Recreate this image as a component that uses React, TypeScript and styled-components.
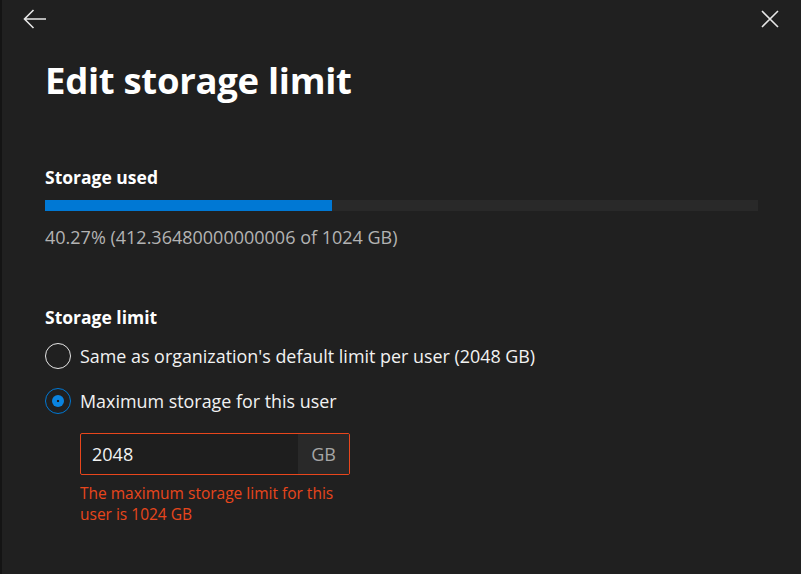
import React, { useState } from 'react';
import styled, { createGlobalStyle } from 'styled-components';

const GlobalStyle = createGlobalStyle`
  html, body {
    margin: 0;
    padding: 0;
    background: #202020;
  }
  body {
    font-family: 'Open Sans', 'Noto Sans', 'Liberation Sans', sans-serif;
    color: #ffffff;
  }
`;

const used = 412.36480000000006;
const total = 1024;

function App() {
  const [mode, setMode] = useState<'default' | 'custom'>('custom');
  const [limit, setLimit] = useState('2048');
  const percent = (used / total) * 100;
  const invalid = Number(limit) > total;

  return (
    <>
      <GlobalStyle />
      <Panel>
        <TopBar>
          <IconButton aria-label="Back">
            <svg width="24" height="20" viewBox="0 0 24 20" fill="none" stroke="#e6e6e6" strokeWidth="1.6">
              <path d="M23 10H1.5M10.5 1L1.5 10l9 9" />
            </svg>
          </IconButton>
          <IconButton aria-label="Close">
            <svg width="18" height="18" viewBox="0 0 18 18" fill="none" stroke="#e6e6e6" strokeWidth="1.6">
              <path d="M1 1l16 16M17 1L1 17" />
            </svg>
          </IconButton>
        </TopBar>

        <Content>
          <Title>Edit storage limit</Title>

          <Section $top={61}>
            <SectionLabel>Storage used</SectionLabel>
            <Track>
              <Fill style={{ width: `${percent}%` }} />
            </Track>
            <Usage>{`${percent.toFixed(2)}% (${used} of ${total} GB)`}</Usage>
          </Section>

          <Section $top={55}>
            <SectionLabel>Storage limit</SectionLabel>
            <RadioGroup>
              <RadioRow onClick={() => setMode('default')}>
                <Radio $checked={mode === 'default'} />
                <RadioText>Same as organization's default limit per user (2048 GB)</RadioText>
              </RadioRow>
              <RadioRow onClick={() => setMode('custom')}>
                <Radio $checked={mode === 'custom'} />
                <RadioText>Maximum storage for this user</RadioText>
              </RadioRow>
            </RadioGroup>

            <LimitField>
              <FieldBox $invalid={invalid}>
                <FieldInput value={limit} onChange={(e) => setLimit(e.target.value)} />
                <Suffix>GB</Suffix>
              </FieldBox>
              {invalid && <ErrorText>{`The maximum storage limit for this user is ${total} GB`}</ErrorText>}
            </LimitField>
          </Section>
        </Content>
      </Panel>
    </>
  );
}

const Panel = styled.div`
  width: 801px;
  height: 574px;
  box-sizing: border-box;
  border-left: 2px solid #141414;
  background: #202020;
  overflow: hidden;
`;

const TopBar = styled.div`
  display: flex;
  justify-content: space-between;
  align-items: center;
  padding: 9px 22px 0 21px;
  height: 20px;
`;

const IconButton = styled.button`
  display: flex;
  align-items: center;
  justify-content: center;
  padding: 0;
  border: none;
  background: none;
  cursor: pointer;
`;

const Content = styled.div`
  display: flex;
  flex-direction: column;
  padding: 0 43px 0 43px;
`;

const Title = styled.h1`
  margin: 27px 0 0;
  font-size: 36.5px;
  line-height: 48px;
  font-weight: 700;
  letter-spacing: -0.3px;
`;

const Section = styled.div<{ $top: number }>`
  display: flex;
  flex-direction: column;
  margin-top: ${(p) => p.$top}px;
`;

const SectionLabel = styled.div`
  font-size: 17.5px;
  line-height: 24px;
  font-weight: 700;
`;

const Track = styled.div`
  margin-top: 11px;
  height: 11px;
  background: #292929;
`;

const Fill = styled.div`
  height: 100%;
  background: #0078d4;
`;

const Usage = styled.div`
  margin-top: 13px;
  font-size: 18px;
  line-height: 26px;
  color: #b3b3b3;
`;

const RadioGroup = styled.div`
  display: flex;
  flex-direction: column;
  gap: 17px;
  margin-top: 13px;
`;

const RadioRow = styled.label`
  display: flex;
  align-items: center;
  gap: 9px;
  cursor: pointer;
`;

const Radio = styled.span<{ $checked: boolean }>`
  width: 26px;
  height: 26px;
  box-sizing: border-box;
  border-radius: 50%;
  border: 1.5px solid ${(p) => (p.$checked ? '#0078d4' : '#e6e6e6')};
  flex-shrink: 0;
  display: flex;
  align-items: center;
  justify-content: center;

  &::after {
    content: '';
    display: ${(p) => (p.$checked ? 'block' : 'none')};
    width: 12px;
    height: 12px;
    border-radius: 50%;
    background: radial-gradient(circle, #1a1a1a 0 1.2px, #0a84e0 1.6px);
  }
`;

const RadioText = styled.span`
  font-size: 17.9px;
  line-height: 28px;
  color: #f2f2f2;
`;

const LimitField = styled.div`
  display: flex;
  flex-direction: column;
  margin: 18px 0 0 35px;
  width: 270px;
`;

const FieldBox = styled.div<{ $invalid: boolean }>`
  display: flex;
  height: 42px;
  box-sizing: border-box;
  border: 1px solid ${(p) => (p.$invalid ? '#e8461c' : '#8a8a8a')};
  border-radius: 2px;
  background: #1e1e1e;
  overflow: hidden;
`;

const FieldInput = styled.input`
  flex: 1;
  min-width: 0;
  border: none;
  outline: none;
  background: transparent;
  padding: 0 11px;
  font-family: inherit;
  font-size: 18px;
  color: #f2f2f2;
`;

const Suffix = styled.span`
  width: 51px;
  display: flex;
  align-items: center;
  justify-content: center;
  background: #292929;
  color: #a6a6a6;
  font-size: 18px;
`;

const ErrorText = styled.div`
  margin-top: 8px;
  font-size: 15.5px;
  line-height: 21px;
  color: #e8461c;
`;

export default App;
